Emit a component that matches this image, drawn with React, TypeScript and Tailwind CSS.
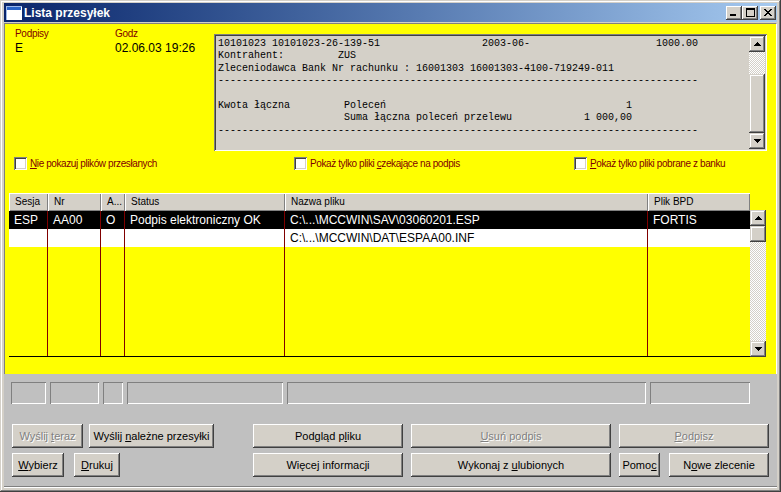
import React from "react";

const F = "font-['Liberation_Sans',Arial,sans-serif]";

function cols(...segs: [number, string][]) {
  let s = "";
  for (const [c, t] of segs) s = s.padEnd(c, " ") + t;
  return s;
}

const LINES = [
  cols([0, "10101023 10101023-26-139-51"], [44, "2003-06-"], [73, "1000.00"]),
  cols([0, "Kontrahent:"], [20, "ZUS"]),
  "Zleceniodawca Bank Nr rachunku : 16001303 16001303-4100-719249-011",
  "-".repeat(80),
  "",
  cols([0, "Kwota łączna"], [21, "Poleceń"], [68, "1"]),
  cols([21, "Suma łączna poleceń przelewu"], [61, "1 000,00"]),
  "-".repeat(80),
];

function Arrow({ dir }: { dir: "up" | "down" }) {
  const rows = dir === "up" ? [0, 1, 2, 3] : [3, 2, 1, 0];
  return (
    <svg width="7" height="4" viewBox="0 0 7 4" shapeRendering="crispEdges">
      {rows.map((r, i) => (
        <rect key={i} x={3 - r} y={i} width={2 * r + 1} height={1} fill="#000" />
      ))}
    </svg>
  );
}

function SBtn({ dir, h = "h-[16px]" }: { dir: "up" | "down"; h?: string }) {
  return (
    <div
      className={`w-[16px] ${h} shrink-0 bg-[#d4d0c8] flex items-center justify-center shadow-[inset_-1px_-1px_#404040,inset_1px_1px_#d4d0c8,inset_-2px_-2px_#808080,inset_2px_2px_#ffffff]`}
    >
      <Arrow dir={dir} />
    </div>
  );
}

function Thumb({ h }: { h: string }) {
  return (
    <div
      className={`w-[16px] ${h} shrink-0 bg-[#d4d0c8] shadow-[inset_-1px_-1px_#404040,inset_1px_1px_#d4d0c8,inset_-2px_-2px_#808080,inset_2px_2px_#ffffff]`}
    />
  );
}

function Checker({ h }: { h: string }) {
  return (
    <div
      className={`w-[16px] ${h} bg-[image:repeating-conic-gradient(#ffffff_0%_25%,#d4d0c8_0%_50%)] bg-[length:2px_2px]`}
    />
  );
}

function Btn({
  w,
  disabled,
  children,
}: {
  w: string;
  disabled?: boolean;
  children: React.ReactNode;
}) {
  return (
    <div
      className={`${w} h-[24px] shrink-0 bg-[#d4d0c8] flex items-center justify-center text-[11px] leading-[13px] shadow-[inset_-1px_-1px_#404040,inset_1px_1px_#ffffff,inset_-2px_-2px_#808080] ${
        disabled ? "text-[#808080] [text-shadow:1px_1px_#ffffff]" : "text-black"
      }`}
    >
      <span>{children}</span>
    </div>
  );
}

function Check({ children, w }: { children: React.ReactNode; w: string }) {
  return (
    <div className={`${w} flex items-center`}>
      <div className="w-[13px] h-[13px] shrink-0 bg-white shadow-[inset_1px_1px_#808080,inset_-1px_-1px_#ffffff,inset_2px_2px_#404040,inset_-2px_-2px_#d4d0c8]" />
      <span className="ml-[3px] text-[10px] leading-[13px] tracking-[-0.4px] text-[#800000] whitespace-nowrap">
        {children}
      </span>
    </div>
  );
}

function TitleBtn({ children }: { children: React.ReactNode }) {
  return (
    <div className="w-[16px] h-[14px] bg-[#d4d0c8] flex items-center justify-center shadow-[inset_-1px_-1px_#404040,inset_1px_1px_#ffffff,inset_-2px_-2px_#808080]">
      {children}
    </div>
  );
}

const COLS = [
  { w: "w-[39px]", h: "Sesja", r: ["ESP", ""], b: true },
  { w: "w-[53px]", h: "Nr", r: ["AA00", ""], b: true },
  { w: "w-[24px]", h: "A...", r: ["O", ""], b: true },
  { w: "w-[160px]", h: "Status", r: ["Podpis elektroniczny OK", ""], b: true },
  {
    w: "w-[363px]",
    h: "Nazwa pliku",
    r: ["C:\\...\\MCCWIN\\SAV\\03060201.ESP", "C:\\...\\MCCWIN\\DAT\\ESPAA00.INF"],
    b: true,
  },
  { w: "w-[102px]", h: "Plik BPD", r: ["FORTIS", ""], b: false },
];

export default function App() {
  return (
    <div
      className={`w-[781px] h-[492px] bg-[#d4d0c8] flex flex-col pt-[3px] px-[4px] pb-[4px] overflow-hidden shadow-[inset_-1px_-1px_#404040,inset_1px_1px_#d4d0c8,inset_-2px_-2px_#808080,inset_2px_2px_#ffffff] ${F}`}
    >
      {/* Title bar */}
      <div className="h-[19px] shrink-0 flex items-center bg-linear-to-r from-[#0a246a] to-[#a6caf0] pl-[2px] pr-[1px]">
        <svg width="16" height="14" viewBox="0 0 16 14" shapeRendering="crispEdges">
          <rect x="0" y="0" width="16" height="14" fill="#ffffff" />
          <rect x="0" y="0" width="16" height="14" fill="none" stroke="#9db9eb" strokeWidth="1" />
          <rect x="1" y="1" width="14" height="3" fill="#2a64c8" />
        </svg>
        <span className="ml-[2px] text-white font-bold text-[12px] leading-[14px]">Lista przesyłek</span>
        <div className="flex-1" />
        <TitleBtn>
          <svg width="8" height="7" viewBox="0 0 8 7" shapeRendering="crispEdges">
            <rect x="0" y="5" width="6" height="2" fill="#000" />
          </svg>
        </TitleBtn>
        <TitleBtn>
          <svg width="9" height="9" viewBox="0 0 9 9" shapeRendering="crispEdges">
            <rect x="0" y="0" width="9" height="2" fill="#000" />
            <rect x="0" y="0" width="1" height="9" fill="#000" />
            <rect x="8" y="0" width="1" height="9" fill="#000" />
            <rect x="0" y="8" width="9" height="1" fill="#000" />
          </svg>
        </TitleBtn>
        <div className="w-[2px]" />
        <TitleBtn>
          <svg width="8" height="7" viewBox="0 0 8 7" shapeRendering="crispEdges">
            {[0, 1, 2, 3, 4, 5, 6].map((i) => (
              <React.Fragment key={i}>
                <rect x={i} y={i} width="2" height="1" fill="#000" />
                <rect x={6 - i} y={i} width="2" height="1" fill="#000" />
              </React.Fragment>
            ))}
          </svg>
        </TitleBtn>
      </div>
      <div className="h-[1px] shrink-0" />

      {/* Client */}
      <div className="flex-1 flex flex-col bg-[#c0c0c0]">
        {/* Yellow panel */}
        <div className="h-[351px] shrink-0 bg-[#ffff00] border-l border-t border-[#808080] border-r border-r-[#ffffff] flex flex-col">
          {/* top section */}
          <div className="flex pt-[4px] pl-[10px]">
            <div className="w-[100px] shrink-0">
              <div className="text-[10px] leading-[12px] tracking-[-0.3px] text-[#800000]">Podpisy</div>
              <div className="mt-[1px] text-[12px] leading-[14px] text-black">E</div>
            </div>
            <div className="w-[99px] shrink-0">
              <div className="text-[10px] leading-[12px] tracking-[-0.3px] text-[#800000]">Godz</div>
              <div className="mt-[1px] text-[12px] leading-[14px] text-black">02.06.03 19:26</div>
            </div>
            <div className="mt-[6px] w-[553px] h-[117px] shrink-0 bg-[#d4d0c8] p-[2px] flex shadow-[inset_1px_1px_#808080,inset_-1px_-1px_#ffffff,inset_2px_2px_#404040,inset_-2px_-2px_#d4d0c8]">
              <pre className="flex-1 overflow-hidden pl-[2px] pt-[2px] font-['Liberation_Mono','Courier_New',monospace] text-[10px] leading-[12.4px] text-black whitespace-pre">
                {LINES.join("\n")}
              </pre>
              <div className="w-[16px] flex flex-col">
                <SBtn dir="up" />
                <Checker h="h-[22px]" />
                <Thumb h="h-[59px]" />
                <SBtn dir="down" />
              </div>
            </div>
          </div>

          {/* checkboxes */}
          <div className="flex mt-[6px] pl-[9px]">
            <Check w="w-[280px]">
              <span className="underline">N</span>ie pokazuj plików przesłanych
            </Check>
            <Check w="w-[280px]">
              Pokaż tylko pliki <span className="underline">c</span>zekające na podpis
            </Check>
            <Check w="w-[190px]">
              <span className="underline">P</span>okaż tylko pliki pobrane z banku
            </Check>
          </div>

          {/* table */}
          <div className="flex mt-[23px] pl-[4px]">
            <div className="w-[741px] flex flex-col">
              <div className="flex h-[18px]">
                {COLS.map((c, i) => (
                  <div
                    key={i}
                    className={`${c.w} shrink-0 bg-[#d4d0c8] flex items-center pl-[6px] text-[10px] leading-[12px] text-black shadow-[inset_1px_1px_#ffffff,inset_-1px_-1px_#808080]`}
                  >
                    {c.h}
                  </div>
                ))}
              </div>
              <div className="flex h-[146px] border-b border-black">
                {COLS.map((c, i) => (
                  <div
                    key={i}
                    className={`${c.w} shrink-0 flex flex-col ${c.b ? "border-r border-[#800000]" : ""}`}
                  >
                    <div className="h-[18px] bg-black text-white text-[12px] leading-[18px] pl-[5px] whitespace-nowrap overflow-hidden">
                      {c.r[0]}
                    </div>
                    <div className="h-[18px] bg-white text-black text-[12px] leading-[18px] pl-[5px] whitespace-nowrap overflow-hidden">
                      {c.r[1]}
                    </div>
                  </div>
                ))}
              </div>
            </div>
            <div className="w-[16px] mt-[17px] h-[147px] flex flex-col">
              <SBtn dir="up" />
              <Thumb h="h-[16px]" />
              <Checker h="flex-1" />
              <SBtn dir="down" />
            </div>
          </div>
        </div>

        {/* Bottom gray area */}
        <div className="flex-1 flex flex-col pt-[8px] shadow-[inset_0_-1px_#ffffff,inset_0_-2px_#808080]">
          <div className="flex pl-[7px] gap-[4px]">
            {["w-[35px]", "w-[49px]", "w-[20px]", "w-[156px]", "w-[359px]", "w-[100px]"].map((w, i) => (
              <div
                key={i}
                className={`${w} h-[22px] shadow-[inset_1px_1px_#808080,inset_-1px_-1px_#ffffff]`}
              />
            ))}
          </div>
          <div className="flex mt-[20px] pl-[8px]">
            <Btn w="w-[71px]" disabled>
              Wyślij <span className="underline">t</span>eraz
            </Btn>
            <div className="w-[6px]" />
            <Btn w="w-[125px]">
              Wyślij <span className="underline">n</span>ależne przesyłki
            </Btn>
            <div className="w-[39px]" />
            <Btn w="w-[150px]">
              Podgląd p<span className="underline">l</span>iku
            </Btn>
            <div className="w-[8px]" />
            <Btn w="w-[200px]" disabled>
              <span className="underline">U</span>suń podpis
            </Btn>
            <div className="w-[8px]" />
            <Btn w="w-[150px]" disabled>
              <span className="underline">P</span>odpisz
            </Btn>
          </div>
          <div className="flex mt-[5px] pl-[8px]">
            <Btn w="w-[52px]">
              <span className="underline">W</span>ybierz
            </Btn>
            <div className="w-[10px]" />
            <Btn w="w-[46px]">
              <span className="underline">D</span>rukuj
            </Btn>
            <div className="w-[133px]" />
            <Btn w="w-[150px]">
              Więce<span className="underline">j</span> informacji
            </Btn>
            <div className="w-[8px]" />
            <Btn w="w-[200px]">
              Wykonaj z <span className="underline">u</span>lubionych
            </Btn>
            <div className="w-[8px]" />
            <Btn w="w-[41px]">
              Pomo<span className="underline">c</span>
            </Btn>
            <div className="w-[9px]" />
            <Btn w="w-[100px]">
              N<span className="underline">o</span>we zlecenie
            </Btn>
          </div>
        </div>
      </div>
    </div>
  );
}
